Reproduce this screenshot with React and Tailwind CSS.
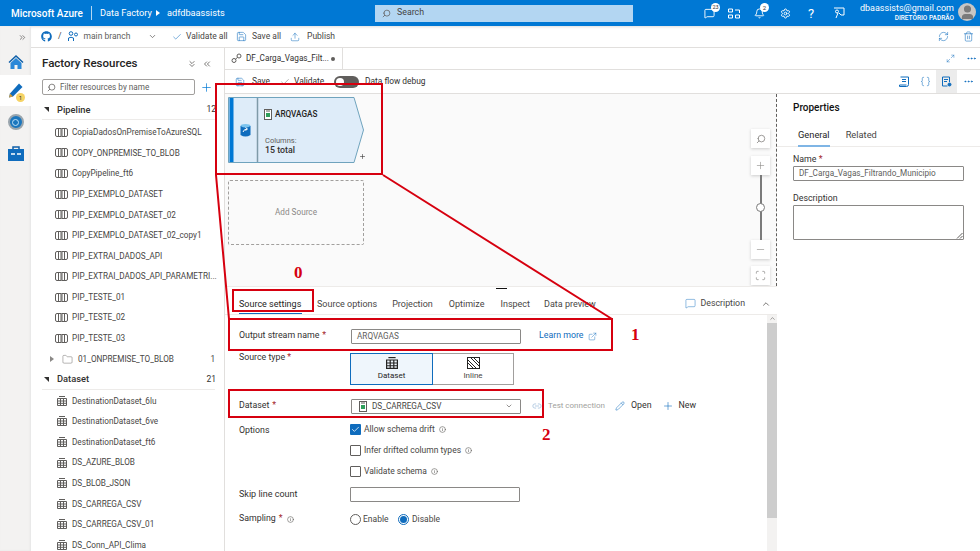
import React from "react";
import { FaGithub } from "react-icons/fa";
import {
  Search, ChevronDown, ChevronUp, Plus, Minus, Settings, Bell, RefreshCw, Pencil,
  ChevronsDown, ChevronsLeft, ChevronsRight, Check, Save, Upload, MessageSquare, Folder,
  MoreHorizontal, Maximize2, Braces, Info, ExternalLink, Link2, Scan, Trash2, User,
} from "lucide-react";

const pipelines = [
  "CopiaDadosOnPremiseToAzureSQL",
  "COPY_ONPREMISE_TO_BLOB",
  "CopyPipeline_ft6",
  "PIP_EXEMPLO_DATASET",
  "PIP_EXEMPLO_DATASET_02",
  "PIP_EXEMPLO_DATASET_02_copy1",
  "PIP_EXTRAI_DADOS_API",
  "PIP_EXTRAI_DADOS_API_PARAMETRI...",
  "PIP_TESTE_01",
  "PIP_TESTE_02",
  "PIP_TESTE_03",
];

const datasets = [
  "DestinationDataset_6lu",
  "DestinationDataset_6ve",
  "DestinationDataset_ft6",
  "DS_AZURE_BLOB",
  "DS_BLOB_JSON",
  "DS_CARREGA_CSV",
  "DS_CARREGA_CSV_01",
  "DS_Conn_API_Clima",
];

const panelTabs = [
  { name: "Source options", gap: "ml-[15px]" },
  { name: "Projection", gap: "ml-[15px]" },
  { name: "Optimize", gap: "ml-[16px]" },
  { name: "Inspect", gap: "ml-[16px]" },
  { name: "Data preview", gap: "ml-[14px]" },
];

function PipelineIcon() {
  return (
    <svg width="13" height="9" viewBox="0 0 13 9" fill="none" stroke="#605e5c" strokeWidth="1" className="shrink-0">
      <path d="M3 .5H2Q.5.5.5 2v5Q.5 8.5 2 8.5h1M10 .5h1q1.500 0 1.500 1.500v5q0 1.500-1.500 1.500h-1" />
      <rect x="3.500" y=".5" width="2.500" height="8" />
      <rect x="7" y=".5" width="2.500" height="8" />
    </svg>
  );
}

function TableIcon({ size = 10, color = "#605e5c" }) {
  return (
    <svg width={size} height={size} viewBox="0 0 10 10" fill="none" stroke={color} strokeWidth="1" className="shrink-0">
      <path d="M.5 2.500h9v7h-9zM.5 5h9M.5 7.300h9M3.500 2.500v7M6.500 2.500v7" />
      <path d="M2 .5h6" />
    </svg>
  );
}

function FileIcon() {
  return (
    <svg width="8" height="11" viewBox="0 0 8 11" className="shrink-0">
      <rect x=".5" y=".5" width="7" height="10" fill="#fff" stroke="#605e5c" />
      <rect x="2" y="4" width="4" height="4" fill="#2e9e5b" />
      <path d="M2 2h4" stroke="#605e5c" />
    </svg>
  );
}

function TreeRow({ name, icon }) {
  return (
    <div className="flex h-[20.600px] items-center gap-[4px] pl-[13px] text-[8.200px] text-[#484644] whitespace-nowrap">
      <span className="flex w-[13px] justify-center">{icon}</span>
      <span>{name}</span>
    </div>
  );
}

function SectionHead({ name, count }) {
  return (
    <div className="flex h-[20px] items-center border-b border-[#edebe9] text-[9.300px] text-[#323130]">
      <span className="ml-[2px] h-0 w-0 border-l-[5px] border-t-[5px] border-l-transparent border-t-[#323130]" />
      <span className="ml-[8px] font-medium">{name}</span>
      <span className="ml-auto mr-[-1px] text-[8.500px]">{count}</span>
    </div>
  );
}

function Sidebar() {
  return (
    <div className="flex w-[31px] shrink-0 flex-col items-center bg-[#f3f2f1] shadow-[inset_-1px_0_2px_#e5e5e5]">
      <div className="flex h-[22px] w-full items-center justify-end pr-[4px] text-[#605e5c]">
        <ChevronsRight size={9} />
      </div>
      <div className="flex h-[27px] w-full items-center justify-center">
        <svg width="16" height="16" viewBox="0 0 16 16">
          <path d="M8 1 .5 8l1 1L8 3l6.500 6 1-1z" fill="#0f5fa8" />
          <path d="M2.500 9 8 4l5.500 5v6h-4v-4h-3v4h-4z" fill="#2b88d8" />
        </svg>
      </div>
      <div className="relative flex h-[31px] w-full items-center justify-center bg-white">
        <svg width="17" height="17" viewBox="0 0 17 17">
          <path d="M12 1.500 15.500 5 6 14.500 2 15.500 3 11.500z" fill="#0f6cbd" />
          <path d="M3 11.500 6 14.500 2 15.500z" fill="#d19b3a" />
        </svg>
        <span className="absolute left-[16px] top-[18px] flex h-[9px] w-[9px] items-center justify-center rounded-full bg-[#f6d365] text-[6px] text-[#323130]">1</span>
      </div>
      <div className="mt-[2px] flex h-[28px] w-full items-center justify-center">
        <span className="flex h-[16px] w-[16px] items-center justify-center rounded-full border-[2px] border-[#9aa5ad] bg-[#1b76bd]">
          <span className="h-[7px] w-[7px] rounded-full border border-[#bfe0f7]" />
        </span>
      </div>
      <div className="mt-[2px] flex h-[30px] w-full items-center justify-center">
        <svg width="16" height="15" viewBox="0 0 16 15">
          <path d="M5 3V1h6v2" fill="none" stroke="#0f5fa8" strokeWidth="1.500" />
          <rect y="3" width="16" height="12" fill="#0f6cbd" />
          <path d="M3 8h4M9 8h4" stroke="#fff" strokeWidth="1.500" />
        </svg>
      </div>
    </div>
  );
}

function FactoryPanel() {
  return (
    <div className="w-[194px] shrink-0 border-r border-[#e1dfdd] bg-white pl-[11px] pr-[9px]">
      <div className="flex h-[31px] items-center justify-between">
        <span className="text-[11.500px] font-medium text-[#252423]">Factory Resources</span>
        <span className="flex items-center gap-[5px] pr-[3px] text-[#605e5c]">
          <ChevronsDown size={10} />
          <ChevronsLeft size={10} />
        </span>
      </div>
      <div className="flex items-center">
        <div className="flex h-[16px] w-[153px] items-center gap-[4px] rounded-[2px] border border-[#a19f9d] px-[4px] text-[8.200px] text-[#605e5c]">
          <Search size={9} className="scale-x-[-1]" />
          <span>Filter resources by name</span>
        </div>
        <Plus size={13} strokeWidth={1.300} className="ml-[5px] text-[#0078d4]" />
      </div>
      <div className="mt-[5px]">
        <SectionHead name="Pipeline" count="12" />
        <div className="pt-[2px]">
          {pipelines.map((p) => (
            <TreeRow key={p} name={p} icon={<PipelineIcon />} />
          ))}
        </div>
        <div className="flex h-[21px] items-center text-[8.200px] text-[#484644]">
          <span className="ml-[8px] h-0 w-0 border-y-[3.500px] border-l-[4px] border-y-transparent border-l-[#8a8886]" />
          <Folder size={11} strokeWidth={1} className="ml-[8px] text-[#605e5c]" />
          <span className="ml-[5px]">01_ONPREMISE_TO_BLOB</span>
          <span className="ml-auto">1</span>
        </div>
        <SectionHead name="Dataset" count="21" />
        <div className="pt-[1px]">
          {datasets.map((d) => (
            <TreeRow key={d} name={d} icon={<TableIcon />} />
          ))}
        </div>
      </div>
    </div>
  );
}

function Canvas() {
  return (
    <div className="relative h-[192px] border-r border-dashed border-[#605e5c] bg-[#fafafa]">
      {/* source node */}
      <div className="absolute left-[3px] top-[3px] h-[66px] w-[136px]">
        <svg width="136" height="66" viewBox="0 0 136 66" className="absolute inset-0">
          <path d="M.5.5H126L135.500 33 126 65.500H.5z" fill="#deecf9" stroke="#6fa3bd" />
          <rect x="1.500" y="1" width="4" height="64" fill="#0078d4" />
          <path d="M29.500 1v64" stroke="#7f9aa8" strokeWidth="1.500" />
        </svg>
        <svg width="11" height="13" viewBox="0 0 11 13" className="absolute left-[12px] top-[27px]">
          <ellipse cx="5.500" cy="2" rx="5" ry="2" fill="#7cc4ef" />
          <path d="M.5 2v9q5 3 10 0V2q-5 3-10 0z" fill="#0f6cbd" />
          <path d="M3 8q1-3 4-3M5.500 3.500 7.500 5 5.500 6.500" fill="none" stroke="#fff" />
        </svg>
        <div className="absolute left-[36px] top-[11px] flex items-center gap-[3px] text-[8.200px] font-medium text-[#252423]">
          <FileIcon />
          <span>ARQVAGAS</span>
        </div>
        <div className="absolute left-[37px] top-[38px] text-[7.500px] text-[#605e5c]">Columns:</div>
        <div className="absolute left-[37px] top-[47px] text-[8.800px] font-medium text-[#323130]">15 total</div>
        <Plus size={7} strokeWidth={2} className="absolute left-[131px] top-[56px] text-[#323130]" />
      </div>

      {/* add source */}
      <div className="absolute left-[3px] top-[86px] flex h-[65px] w-[136px] items-center justify-center rounded-[2px] border border-dashed border-[#a19f9d] text-[8.200px] text-[#8a8886]">
        Add Source
      </div>

      {/* zoom controls */}
      <div className="absolute left-[526px] top-[35px] flex flex-col items-center">
        <div className="flex h-[19px] w-[19px] items-center justify-center bg-white text-[#8a8886] shadow-[0_1px_3px_#ccc]">
          <Search size={10} className="scale-x-[-1]" />
        </div>
        <div className="mt-[8px] flex h-[19px] w-[19px] items-center justify-center bg-white text-[#8a8886] shadow-[0_1px_3px_#ccc]">
          <Plus size={11} strokeWidth={1.300} />
        </div>
        <div className="relative flex h-[65px] w-[2px] justify-center bg-[#7a7a7a]">
          <span className="absolute top-[28px] h-[9px] w-[9px] rounded-full border border-[#7a7a7a] bg-white" />
        </div>
        <div className="flex h-[19px] w-[19px] items-center justify-center bg-white text-[#8a8886] shadow-[0_1px_3px_#ccc]">
          <Minus size={11} strokeWidth={1.300} />
        </div>
        <div className="mt-[7px] flex h-[19px] w-[19px] items-center justify-center bg-white text-[#605e5c] shadow-[0_1px_3px_#ccc]">
          <Scan size={11} strokeWidth={1.200} />
        </div>
      </div>
    </div>
  );
}

function Label({ children, info, required }) {
  return (
    <span className="flex w-[112px] shrink-0 items-center gap-[3px] text-[8.800px] text-[#323130]">
      {children}
      {required && <span className="text-[#a4262c]">*</span>}
      {info && <Info size={7} className="ml-[1px] text-[#605e5c]" />}
    </span>
  );
}

function CheckRow({ label, checked, className }) {
  return (
    <div className={`flex h-[12px] items-center gap-[3px] text-[8.500px] leading-[12px] text-[#484644] ${className || ""}`}>
      {checked ? (
        <span className="flex h-[11px] w-[11px] items-center justify-center rounded-[1px] bg-[#0f6cbd] text-white">
          <Check size={9} strokeWidth={2} />
        </span>
      ) : (
        <span className="h-[11px] w-[11px] rounded-[1px] border border-[#605e5c] bg-white" />
      )}
      <span>{label}</span>
      <Info size={7} className="ml-[1px] text-[#605e5c]" />
    </div>
  );
}

function SourceForm() {
  return (
    <div className="relative flex-1 overflow-hidden pl-[14px]">
      <div className="absolute bottom-0 right-0 top-0 flex w-[10px] flex-col items-center bg-[#f3f2f1]">
        <ChevronUp size={7} className="text-[#605e5c]" />
        <div className="mt-[1px] h-[195px] w-full bg-[#cdcdcd]" />
      </div>
      <div className="mt-[14px] flex h-[14px] items-center">
        <Label required>Output stream name</Label>
        <div className="flex h-[15px] w-[170px] items-center rounded-[1px] border border-[#8a8886] px-[5px] text-[8.200px] text-[#605e5c]">ARQVAGAS</div>
        <span className="ml-[18px] flex items-center gap-[4px] text-[8.800px] text-[#0f6cbd]">
          Learn more <ExternalLink size={9} strokeWidth={1.200} />
        </span>
      </div>
      <div className="mt-[10px] flex h-[32px]">
        <span className="w-[111px] shrink-0 text-[8.800px] leading-[9px] text-[#323130]">Source type <span className="text-[#a4262c]">*</span></span>
        <div className="flex h-[32px] w-[83px] flex-col items-center justify-center gap-[1px] border border-[#0f6cbd] bg-[#eff6fc] text-[8px] leading-[11px] text-[#252423]">
          <TableIcon size={12} color="#252423" />
          <span>Dataset</span>
        </div>
        <div className="flex h-[32px] w-[81px] flex-col items-center justify-center gap-[1px] border border-l-0 border-[#a19f9d] text-[8px] leading-[11px] text-[#484644]">
          <svg width="13" height="12" viewBox="0 0 13 12">
            <rect x=".5" y=".5" width="12" height="11" fill="#fff" stroke="#252423" />
            <path d="M1 3l8 8M1 6l5 5M4 1l8 8M7 1l5 5" stroke="#252423" />
          </svg>
          <span>Inline</span>
        </div>
      </div>
      <div className="mt-[14px] flex h-[14px] items-center">
        <Label required>Dataset</Label>
        <div className="flex h-[15px] w-[170px] items-center gap-[5px] rounded-[1px] border border-[#8a8886] px-[7px] text-[8.200px] text-[#484644]">
          <FileIcon />
          <span>DS_CARREGA_CSV</span>
          <ChevronDown size={8} className="ml-auto text-[#605e5c]" />
        </div>
        <Link2 size={10} className="ml-[11px] text-[#a8c4de]" />
        <span className="ml-[6px] w-[57px] text-[8px] whitespace-nowrap text-[#a19f9d]">Test connection</span>
        <Pencil size={10} strokeWidth={1.200} className="ml-[10px] text-[#0f6cbd]" />
        <span className="ml-[6px] text-[8.800px] text-[#323130]">Open</span>
        <Plus size={12} strokeWidth={1.200} className="ml-[10px] text-[#0f6cbd]" />
        <span className="ml-[5px] text-[8.800px] text-[#323130]">New</span>
      </div>
      <div className="mt-[10px] flex">
        <span className="mt-[1px] w-[111px] shrink-0 text-[8.800px] leading-[12px] text-[#323130]">Options</span>
        <div className="flex flex-col">
          <CheckRow label="Allow schema drift" checked />
          <CheckRow label="Infer drifted column types" className="mt-[9px]" />
          <CheckRow label="Validate schema" className="mt-[9px]" />
        </div>
      </div>
      <div className="mt-[10px] flex h-[15px] items-center">
        <span className="w-[111px] shrink-0 text-[9px] text-[#323130]">Skip line count</span>
        <div className="h-[15px] w-[170px] rounded-[1px] border border-[#8a8886]" />
      </div>
      <div className="mt-[10px] flex h-[14px] items-center">
        <Label required info>Sampling</Label>
        <span className="ml-[-1px] h-[11px] w-[11px] rounded-full border border-[#605e5c]" />
        <span className="ml-[2px] w-[25px] text-[8.500px] whitespace-nowrap text-[#484644]">Enable</span>
        <span className="ml-[10px] flex h-[11px] w-[11px] items-center justify-center rounded-full border border-[#0f6cbd]">
          <span className="h-[7px] w-[7px] rounded-full bg-[#0f6cbd]" />
        </span>
        <span className="ml-[3px] text-[8.500px] text-[#484644]">Disable</span>
      </div>
    </div>
  );
}

function BottomPanel() {
  return (
    <div className="relative flex flex-1 flex-col overflow-hidden bg-white">
      <span className="absolute left-[271px] top-[2px] h-[1px] w-[11px] bg-[#111]" />
      <div className="flex h-[29px] shrink-0 items-end border-y border-[#edebe9] pl-[14px] text-[9px] text-[#484644]">
        <span className="h-[21px] w-[63px] border-b-[1.500px] border-[#0f6cbd] pt-[5px] whitespace-nowrap text-[#252423]">Source settings</span>
        {panelTabs.map((t) => (
          <span key={t.name} className={`h-[21px] pt-[5px] ${t.gap}`}>{t.name}</span>
        ))}
        <span className="mb-[4px] ml-auto flex items-center gap-[4px] self-end text-[8.800px]">
          <MessageSquare size={11} strokeWidth={1} className="text-[#0f6cbd]" />
          Description
        </span>
        <ChevronUp size={10} className="mb-[5px] ml-[16px] mr-[6px] text-[#605e5c]" />
      </div>
      <SourceForm />
    </div>
  );
}

function PropertiesPanel() {
  return (
    <div className="w-[203px] shrink-0 bg-white">
      <div className="ml-[16px] mt-[7px] text-[10px] font-medium leading-[13px] text-[#111]">Properties</div>
      <div className="mt-[14px] flex h-[19px] gap-[16px] border-b border-[#edebe9] pl-[21px] text-[9.300px] leading-[13px] text-[#484644]">
        <span className="h-[19px] border-b-2 border-[#7fb5e5] text-[#252423]">General</span>
        <span>Related</span>
      </div>
      <div className="ml-[16px] mt-[6px] text-[8.800px] leading-[12px] text-[#323130]">Name <span className="text-[#a4262c]">*</span></div>
      <div className="ml-[16px] mt-[1px] flex h-[15px] w-[171px] items-center rounded-[1px] border border-[#8a8886] px-[5px] text-[8.200px] text-[#605e5c]">
        DF_Carga_Vagas_Filtrando_Municipio
      </div>
      <div className="ml-[16px] mt-[11px] text-[8.800px] leading-[12px] text-[#323130]">Description</div>
      <div className="relative ml-[16px] mt-[1px] h-[35px] w-[171px] rounded-[1px] border border-[#8a8886]">
        <svg width="7" height="7" viewBox="0 0 7 7" className="absolute bottom-0 right-0" stroke="#605e5c">
          <path d="M1 6.500 6.500 1M4 6.500 6.500 4" />
        </svg>
      </div>
    </div>
  );
}

function Editor() {
  return (
    <div className="flex min-w-0 flex-1 flex-col">
      <div className="flex h-[22px] shrink-0 items-stretch border-b border-[#e1dfdd]">
        <div className="flex w-[118px] items-center border-r border-[#e1dfdd] pl-[6px] text-[8.200px] text-[#323130]">
          <svg width="11" height="11" viewBox="0 0 11 11" fill="none" stroke="#605e5c">
            <circle cx="3" cy="7.500" r="2" />
            <circle cx="8" cy="3" r="2" />
            <path d="M4.500 6 6.500 4.500" />
          </svg>
          <span className="ml-[4px] w-[78px] whitespace-nowrap">DF_Carga_Vagas_Filt...</span>
          <span className="ml-[7px] h-[4px] w-[4px] rounded-full bg-[#605e5c]" />
        </div>
        <div className="ml-auto flex items-center gap-[11px] pr-[3px] text-[#0f6cbd]">
          <Maximize2 size={9} strokeWidth={1.200} />
          <MoreHorizontal size={11} />
        </div>
      </div>
      <div className="flex h-[24px] shrink-0 items-center border-b border-[#e1dfdd] pl-[10px] text-[8.400px] text-[#323130]">
        <Save size={10} strokeWidth={1.300} className="text-[#0f6cbd]" />
        <span className="ml-[7px] w-[16px] whitespace-nowrap">Save</span>
        <Check size={10} strokeWidth={1.200} className="ml-[12px] text-[#605e5c]" />
        <span className="ml-[4px] w-[29px] whitespace-nowrap">Validate</span>
        <span className="ml-[11px] flex h-[12px] w-[25px] items-center rounded-full bg-[#605e5c] pl-[2px]">
          <span className="h-[8px] w-[8px] rounded-full bg-white" />
        </span>
        <span className="ml-[6px]">Data flow debug</span>
        <div className="ml-auto flex h-full items-center text-[#0f6cbd]">
          <svg width="11" height="11" viewBox="0 0 11 11" fill="none" stroke="#0f6cbd" className="mr-[11px]">
            <path d="M2.500 1h8v7.500q0 2-2 2h-7V9h7M4 3.500h4M4 5.500h4" />
          </svg>
          <Braces size={11} strokeWidth={1.200} className="mr-[5px]" />
          <span className="flex h-full w-[21px] items-center justify-center bg-[#ececec]">
            <svg width="11" height="11" viewBox="0 0 11 11" fill="none" stroke="#0f6cbd">
              <path d="M8.500 6V1h-7v9h5M3 3.500h4M3 5.500h3" />
              <circle cx="8.500" cy="8.500" r="1.500" fill="#0f6cbd" />
            </svg>
          </span>
          <MoreHorizontal size={11} className="ml-[6px] mr-[6px]" />
        </div>
      </div>
      <div className="flex min-h-0 flex-1">
        <div className="flex w-[552px] shrink-0 flex-col">
          <Canvas />
          <BottomPanel />
        </div>
        <PropertiesPanel />
      </div>
    </div>
  );
}

function Header() {
  return (
    <div className="relative flex h-[26px] items-center bg-[#0078d4] text-white">
      <div className="flex w-[375px] shrink-0 items-center">
        <span className="ml-[11px] w-[70px] whitespace-nowrap text-[10px] font-medium">Microsoft Azure</span>
        <span className="ml-[10px] h-[14px] w-px bg-white/70" />
        <span className="ml-[8px] w-[49px] whitespace-nowrap text-[9.200px]">Data Factory</span>
        <span className="ml-[7px] h-0 w-0 border-y-[3px] border-l-[4px] border-y-transparent border-l-white" />
        <span className="ml-[7px] text-[9.200px]">adfdbaassists</span>
      </div>
      <div className="flex h-[17px] w-[258px] items-center gap-[6px] bg-[#b3d6f2] pl-[7px] text-[8.800px] text-[#444]">
        <Search size={9} className="scale-x-[-1] text-[#605e5c]" />
        Search
      </div>
      <div className="ml-[71px] flex items-center">
        <span className="relative mr-[13px]">
          <MessageSquare size={11} />
          <span className="absolute left-[7px] top-[-5px] flex h-[9px] w-[9px] items-center justify-center rounded-full bg-white text-[5.500px] text-[#323130]">23</span>
        </span>
        <svg width="12" height="11" viewBox="0 0 12 11" fill="none" stroke="#fff" className="mr-[14px]">
          <path d="M.5 1h4v3h-4zM.5 7h4v3h-4zM7.500 7h4v3h-4zM7 2h4.500v3" />
        </svg>
        <span className="relative mr-[15px]">
          <Bell size={11} />
          <span className="absolute left-[6px] top-[-5px] flex h-[9px] w-[9px] items-center justify-center rounded-full bg-white text-[6px] text-[#323130]">2</span>
        </span>
        <Settings size={11} className="mr-[16px]" />
        <span className="mr-[18px] w-[8px] text-center text-[13px] leading-none">?</span>
        <svg width="12" height="12" viewBox="0 0 12 12" fill="none" stroke="#fff">
          <path d="M1 1h10v7H8L6 6M3 11l2-5" />
          <circle cx="4" cy="4.500" r="1.500" />
        </svg>
      </div>
      <div className="absolute right-[26px] top-[3px] text-right">
        <div className="text-[9px] leading-[11px]">dbaassists@gmail.com</div>
        <div className="text-[6.500px] font-medium leading-[9px]">DIRETÓRIO PADRÃO</div>
      </div>
      <span className="absolute right-[4px] top-[3px] flex h-[18px] w-[18px] items-end justify-center overflow-hidden rounded-full bg-[#c8c6c4] text-[#7a7a7a]">
        <User size={17} fill="#7a7a7a" />
      </span>
    </div>
  );
}

function Annotations() {
  return (
    <>
      <svg width="980" height="551" viewBox="0 0 980 551" className="pointer-events-none absolute inset-0" fill="none" stroke="#d6000f" strokeWidth="2">
        <path d="M216 175 229 319M383 175 612 319" />
      </svg>
      <div className="absolute left-[215px] top-[83px] h-[92px] w-[168px] border-2 border-[#d6000f]" />
      <div className="absolute left-[232px] top-[289px] h-[23px] w-[82px] border-2 border-[#d6000f]" />
      <div className="absolute left-[228px] top-[318px] h-[33px] w-[385px] border-2 border-[#d6000f]" />
      <div className="absolute left-[228px] top-[389px] h-[29px] w-[316px] border-2 border-[#d6000f]" />
      <span className="absolute left-[294px] top-[263px] font-['Liberation_Serif',serif] text-[17px] font-bold leading-[20px] text-[#d6000f]">0</span>
      <span className="absolute left-[631px] top-[325px] font-['Liberation_Serif',serif] text-[17px] font-bold leading-[20px] text-[#d6000f]">1</span>
      <span className="absolute left-[542px] top-[425px] font-['Liberation_Serif',serif] text-[17px] font-bold leading-[20px] text-[#d6000f]">2</span>
    </>
  );
}

export default function App() {
  return (
    <div className="relative h-[551px] w-[980px] overflow-hidden bg-white font-['Roboto','Open_Sans',sans-serif]">
      <Header />
      <div className="flex h-[525px]">
        <Sidebar />
        <div className="flex min-w-0 flex-1 flex-col">
          <div className="flex h-[22px] shrink-0 items-center border-b border-[#e1dfdd] pl-[10px] text-[8.500px] text-[#484644] shadow-[inset_0_3px_3px_-2px_#ddd]">
            <FaGithub size={11} className="text-[#0f6cbd]" />
            <span className="ml-[6px]">/</span>
            <svg width="11" height="11" viewBox="0 0 11 11" fill="none" stroke="#0f6cbd" className="ml-[6px]">
              <circle cx="3" cy="2.500" r="1.800" />
              <circle cx="8" cy="3.500" r="1.500" />
              <path d="M.5 10V7q2.500-1.500 5 0v3" />
            </svg>
            <span className="ml-[5px] w-[46px] whitespace-nowrap text-[#605e5c]">main branch</span>
            <ChevronDown size={9} className="ml-[18px] text-[#605e5c]" />
            <Check size={10} strokeWidth={1.300} className="ml-[15px] text-[#0f6cbd]" />
            <span className="ml-[4.500px] w-[41px] whitespace-nowrap">Validate all</span>
            <Save size={11} strokeWidth={1.200} className="ml-[9px] text-[#0f6cbd]" />
            <span className="ml-[5px] w-[29px] whitespace-nowrap">Save all</span>
            <Upload size={10} strokeWidth={1.200} className="ml-[9px] text-[#0f6cbd]" />
            <span className="ml-[7px]">Publish</span>
            <span className="ml-auto flex items-center gap-[14px] pr-[6px] text-[#0f6cbd]">
              <RefreshCw size={11} strokeWidth={1.200} />
              <Trash2 size={11} strokeWidth={1.200} />
            </span>
          </div>
          <div className="flex min-h-0 flex-1">
            <FactoryPanel />
            <Editor />
          </div>
        </div>
      </div>
      <Annotations />
    </div>
  );
}
